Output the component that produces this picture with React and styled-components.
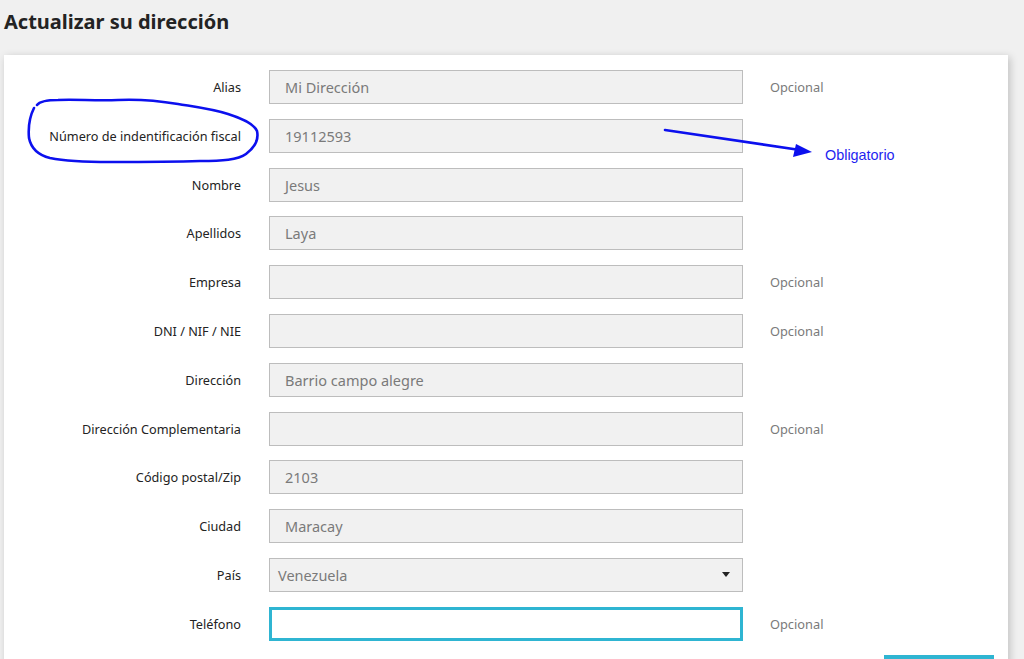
import React from 'react';
import styled, { createGlobalStyle } from 'styled-components';

const GlobalStyle = createGlobalStyle`
    html, body {
        margin: 0;
        padding: 0;
        background: #f0f0f0;
        overflow: hidden;
    }
    body {
        font-family: "Noto Sans", sans-serif;
        color: #232323;
    }
`;

const Page = styled.div`
    position: relative;
    height: 659px;
    padding: 0 16px 0 4px;
    overflow: hidden;
`;

const Title = styled.h1`
    margin: 0;
    padding: 8px 0 0 0;
    height: 47px;
    font-size: 20px;
    font-weight: 700;
    line-height: 28px;
    color: #232323;
`;

const Card = styled.section`
    background: #fff;
    box-shadow: 2px 2px 8px 0 rgba(0, 0, 0, 0.2);
    padding: 15px 0 40px 0;
`;

const Row = styled.div`
    display: grid;
    grid-template-columns: 237px 474px 1fr;
    column-gap: 28px;
    align-items: center;
    height: 34px;
    margin-bottom: 14.8px;
`;

const Label = styled.label`
    text-align: right;
    font-size: 12.7px;
    color: #232323;
`;

const Input = styled.div`
    box-sizing: border-box;
    height: 34px;
    display: flex;
    align-items: center;
    justify-content: space-between;
    padding: 0 ${p => (p.$select ? '12px 0 8px' : '15px')};
    background: ${p => (p.$focus ? '#fff' : '#f1f1f1')};
    border: ${p => (p.$focus ? '3px solid #2fb5d2' : '1px solid #bdbdbd')};
    font-size: 14.5px;
    color: #7a7a7a;
`;

const Caret = styled.span`
    width: 0;
    height: 0;
    border-left: 4px solid transparent;
    border-right: 4px solid transparent;
    border-top: 5px solid #232323;
`;

const Comment = styled.span`
    font-size: 12.8px;
    color: #7a7a7a;
    margin-left: -1px;
`;

const Footer = styled.div`
    display: flex;
    justify-content: flex-end;
    padding: 0 14px 0 0;
    margin-top: -1px;
`;

const Button = styled.button`
    width: 110px;
    height: 40px;
    background: #2fb5d2;
    border: none;
    color: #fff;
    font-family: inherit;
`;

const Annotation = styled.svg`
    position: absolute;
    left: 0;
    top: 0;
    pointer-events: none;
`;

const Note = styled.span`
    position: absolute;
    left: 825px;
    top: 147px;
    font-family: "Liberation Sans", Arial, sans-serif;
    font-size: 14.4px;
    color: #1f1ff0;
`;

const fields = [
    { label: 'Alias', value: 'Mi Dirección', comment: 'Opcional' },
    { label: 'Número de indentificación fiscal', value: '19112593' },
    { label: 'Nombre', value: 'Jesus' },
    { label: 'Apellidos', value: 'Laya' },
    { label: 'Empresa', value: '', comment: 'Opcional' },
    { label: 'DNI / NIF / NIE', value: '', comment: 'Opcional' },
    { label: 'Dirección', value: 'Barrio campo alegre' },
    { label: 'Dirección Complementaria', value: '', comment: 'Opcional' },
    { label: 'Código postal/Zip', value: '2103' },
    { label: 'Ciudad', value: 'Maracay' },
    { label: 'País', value: 'Venezuela', select: true },
    { label: 'Teléfono', value: '', comment: 'Opcional', focus: true },
];

export default function App() {
    return (
        <React.Fragment>
            <GlobalStyle />
            <Page>
                <Title>Actualizar su dirección</Title>
                <Card>
                    {fields.map(f => (
                        <Row key={f.label}>
                            <Label>{f.label}</Label>
                            <Input $select={f.select} $focus={f.focus}>
                                <span>{f.value}</span>
                                {f.select && <Caret />}
                            </Input>
                            <Comment>{f.comment}</Comment>
                        </Row>
                    ))}
                    <Footer>
                        <Button />
                    </Footer>
                </Card>

                {/* hand-drawn annotation */}
                <Annotation width="1024" height="659" viewBox="0 0 1024 659">
                    <path
                        d="M37 105 C 40 101, 48 100, 58 100 C 75 99, 95 101, 118 100 C 140 99, 160 101, 178 104 C 196 107, 212 109, 228 114 C 244 119, 254 124, 257 131 C 259 140, 254 148, 246 154 C 238 160, 222 161, 200 161 C 170 162, 140 162, 110 162 C 85 162, 65 161, 50 158 C 38 155, 31 148, 29 138 C 28 127, 30 116, 34 108"
                        fill="none"
                        stroke="#0c10ee"
                        strokeWidth="2.6"
                        strokeLinecap="round"
                    />
                    <line x1="665" y1="130" x2="800" y2="150" stroke="#0c10ee" strokeWidth="2.6" strokeLinecap="round" />
                    <polygon points="812,152 796,144 793,157" fill="#0c10ee" />
                </Annotation>
                <Note>Obligatorio</Note>
            </Page>
        </React.Fragment>
    );
}
